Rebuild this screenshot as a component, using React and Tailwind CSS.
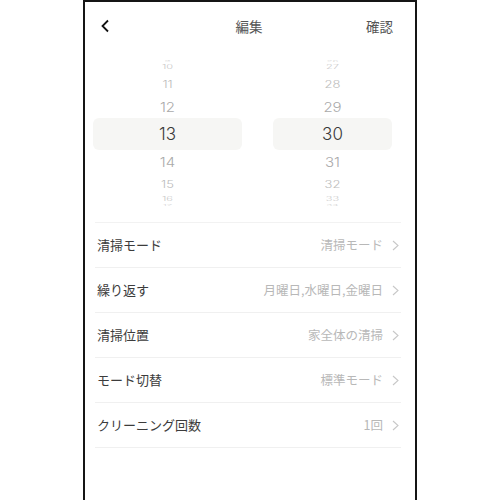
import React from "react";

const font = { fontFamily: '"Noto Sans CJK JP", "Noto Sans", sans-serif' };

const hours = [
  { v: "9", h: "h-[2px]", cls: "text-[10px] text-[#d6d6d6] scale-y-[0.2]" },
  { v: "10", h: "h-[10px]", cls: "text-[11px] text-[#c8c8c8] scale-y-50" },
  { v: "11", h: "h-[24px]", cls: "text-[13px] text-[#bcbcbc] scale-y-75" },
  { v: "12", h: "h-[22px]", cls: "text-[15px] text-[#aaaaaa] scale-y-90" },
  { v: "13", h: "h-[32px]", cls: "text-[17px] text-[#3a3a3a]", sel: true },
  { v: "14", h: "h-[24px]", cls: "text-[15px] text-[#aaaaaa] scale-y-90" },
  { v: "15", h: "h-[20px]", cls: "text-[13px] text-[#bcbcbc] scale-y-75" },
  { v: "16", h: "h-[10px]", cls: "text-[11px] text-[#c8c8c8] scale-y-50" },
  { v: "17", h: "h-[2px]", cls: "text-[10px] text-[#d6d6d6] scale-y-[0.2]" },
];

const minutes = ["26", "27", "28", "29", "30", "31", "32", "33", "34"];

const rows = [
  ["清掃モード", "清掃モード"],
  ["繰り返す", "月曜日,水曜日,金曜日"],
  ["清掃位置", "家全体の清掃"],
  ["モード切替", "標準モード"],
  ["クリーニング回数", "1回"],
];

function Wheel({ values, width }) {
  return (
    <div className={`flex flex-col ${width}`} style={{ fontFamily: 'Inter, "Noto Sans", sans-serif' }}>
      {hours.map((item, i) => (
        <div
          key={i}
          className={`${item.h} flex items-center justify-center ${item.sel ? "bg-[#f6f6f4] rounded-md" : ""}`}
        >
          <span className={`block leading-none font-light ${item.cls}`}>{values[i]}</span>
        </div>
      ))}
    </div>
  );
}

function Chevron() {
  return (
    <svg width="7" height="11" viewBox="0 0 7 11" fill="none">
      <polyline points="1,1 6,5.5 1,10" stroke="#c8c8c8" strokeWidth="1.1" />
    </svg>
  );
}

export default function App() {
  return (
    <div className="w-[500px] h-[500px] bg-white overflow-hidden" style={font}>
      <div className="ml-[83px] w-[334px] h-[500px] border-x-2 border-t-2 border-[#151515] bg-white">
        <div className="h-[48px] flex items-center justify-between pl-[15px] pr-[22px]">
          <svg width="10" height="14" viewBox="0 0 10 14" fill="none">
            <polyline points="8,1.5 2.5,7 8,12.5" stroke="#111" strokeWidth="1.8" />
          </svg>
          <span className="text-[13.5px] text-[#555] pl-[22px]">編集</span>
          <span className="text-[13.5px] text-[#555]">確認</span>
        </div>

        <div className="flex pl-[8px] gap-[31px] pt-[10px]">
          <Wheel values={hours.map((h) => h.v)} width="w-[149px]" />
          <Wheel values={minutes} width="w-[119px]" />
        </div>

        <div className="ml-[10px] mr-[14px] mt-[16px] border-t border-[#f2f2f2]">
          {rows.map(([label, value]) => (
            <div
              key={label}
              className="h-[45px] flex items-center justify-between border-b border-[#f0f0f0] pl-[2px] pr-[2px]"
            >
              <span className="text-[13px] text-[#3c3c3c]">{label}</span>
              <div className="flex items-center gap-[9px]">
                <span className="text-[12.5px] text-[#b8b8b8]">{value}</span>
                <Chevron />
              </div>
            </div>
          ))}
        </div>
      </div>
    </div>
  );
}
